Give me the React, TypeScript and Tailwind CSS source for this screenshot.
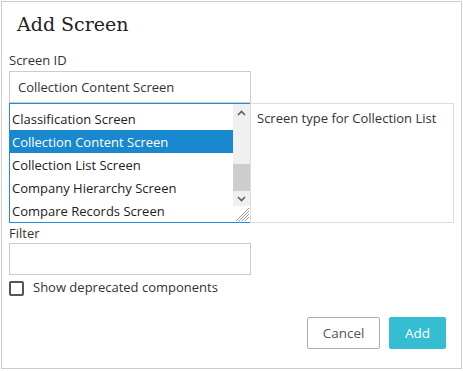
import React from "react";

const items = [
  "Classification Screen",
  "Collection Content Screen",
  "Collection List Screen",
  "Company Hierarchy Screen",
  "Compare Records Screen",
];

function ScrollBar() {
  return (
    <div className="w-[17px] flex flex-col bg-[#f0f0f0]">
      <div className="h-[17px] flex items-center justify-center">
        <svg width="9" height="6" viewBox="0 0 9 6">
          <path d="M1 5 L4.5 1.5 L8 5" stroke="#606060" strokeWidth="1.6" fill="none" />
        </svg>
      </div>
      <div className="h-[43px]" />
      <div className="h-[27px] bg-[#cdcdcd]" />
      <div className="flex-1 flex items-center justify-center">
        <svg width="9" height="6" viewBox="0 0 9 6">
          <path d="M1 1 L4.5 4.5 L8 1" stroke="#606060" strokeWidth="1.6" fill="none" />
        </svg>
      </div>
      <div className="h-[16px] bg-white flex items-end justify-end">
        <svg width="16" height="16" viewBox="0 0 16 16">
          <path
            d="M15 5 L5 15 M15 8 L8 15 M15 11 L11 15 M15 2 L2 15"
            stroke="#9a9a9a"
            strokeWidth="1"
            fill="none"
          />
        </svg>
      </div>
    </div>
  );
}

export default function App() {
  return (
    <div className="w-[461px] h-[368px] ml-px mt-px border border-[#cccccc] bg-white text-[#333] font-['Open_Sans',sans-serif] text-[13px]">
      <h1 className="pl-[15px] pt-[10px] h-[46px] text-[19px] leading-[24px] text-[#222] font-['DejaVu_Serif',serif]">
        Add Screen
      </h1>
      <div className="pl-[7px] pr-[7px]">
        <label className="block h-[23px] leading-[17px] pt-[4px]">Screen ID</label>
        <div className="w-[242px] h-[32px] border border-[#cccccc] pl-[8px] pt-[2px] flex items-center">
          Collection Content Screen
        </div>
        <div className="flex h-[120px]">
          <div className="w-[242px] border border-[#1e8fd5] flex overflow-hidden">
            <div className="flex-1 pt-[3px]">
              {items.map((t, i) => (
                <div
                  key={t}
                  className={
                    i === 1
                      ? "h-[23px] leading-[24px] pl-[2px] bg-[#1a88cf] text-white"
                      : "h-[23px] leading-[24px] pl-[2px] text-[#222]"
                  }
                >
                  {t}
                </div>
              ))}
            </div>
            <ScrollBar />
          </div>
          <div className="w-[204px] -ml-px border border-[#dddddd] px-[6px] pt-[6px] leading-[17px]">
            Screen type for Collection List
          </div>
        </div>
        <label className="block h-[20px] leading-[17px] pt-[2px]">Filter</label>
        <div className="w-[242px] h-[32px] border border-[#cccccc]" />
        <div className="flex items-center gap-[9px] mt-[5px] h-[16px]">
          <div className="w-[15px] h-[15px] border-2 border-[#555] rounded-[2px]" />
          <span>Show deprecated components</span>
        </div>
        <div className="flex justify-end gap-[9px] mt-[21px] pr-[8px]">
          <button className="w-[73px] h-[32px] border border-[#adadad] rounded-[2px] text-[#555] text-[13.5px]">
            Cancel
          </button>
          <button className="w-[57px] h-[32px] bg-[#35bdd1] rounded-[2px] text-white text-[13.5px]">
            Add
          </button>
        </div>
      </div>
    </div>
  );
}
